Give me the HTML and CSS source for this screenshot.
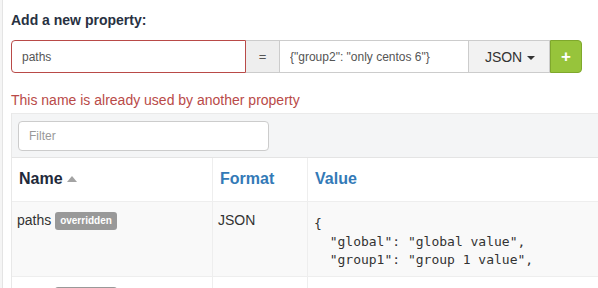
FILE: index.html
```html
<!DOCTYPE html>
<html lang="en">
<head>
  <meta charset="UTF-8">
  <title>Properties</title>
  <link rel="stylesheet" href="styles.css">
</head>
<body>
  <div class="page">
    <h4 class="add-title">Add a new property:</h4>
    <div class="add-group">
      <input class="add-name" type="text" value="paths">
      <span class="add-eq">=</span>
      <input class="add-value" type="text" value='{"group2": "only centos 6"}'>
      <button class="add-format" type="button">JSON <span class="caret"></span></button>
      <button class="add-btn" type="button">+</button>
    </div>
    <p class="add-error">This name is already used by another property</p>

    <div class="props">
      <div class="props-toolbar">
        <input class="props-filter" type="text" placeholder="Filter">
      </div>
      <table class="props-table">
        <thead>
          <tr>
            <th class="col-name">Name <span class="sort-up"></span></th>
            <th class="col-format"><a href="#">Format</a></th>
            <th class="col-value"><a href="#">Value</a></th>
          </tr>
        </thead>
        <tbody>
          <tr class="odd">
            <td>paths <span class="badge">overridden</span></td>
            <td>JSON</td>
            <td><pre class="code">{
  "global": "global value",
  "group1": "group 1 value",</pre></td>
          </tr>
          <tr>
            <td>paths <span class="badge">overridden</span></td>
            <td>JSON</td>
            <td><pre class="code">{</pre></td>
          </tr>
        </tbody>
      </table>
    </div>
  </div>
</body>
</html>
```

FILE: styles.css
```css
html, body {
  margin: 0;
  padding: 0;
  overflow: hidden;
}
body {
  font-family: "Liberation Sans", Arial, sans-serif;
  font-size: 14px;
  line-height: 20px;
  color: #333;
  background: #f5f5f5;
}
.page {
  margin-left: 2px;
  border-left: 1px solid #e4e4e4;
  background: #fff;
  padding: 10px 0 0 8px;
  min-height: 288px;
}
.add-title {
  margin: 0 0 10px;
  font-size: 14px;
  font-weight: bold;
  color: #283142;
}

/* input group */
.add-group {
  display: flex;
  width: 571px;
  height: 33px;
}
.add-group input {
  font-family: "Liberation Sans", Arial, sans-serif;
  font-size: 12px;
  color: #555;
  box-sizing: border-box;
  height: 33px;
  padding: 0 10px;
  border: 1px solid #ccc;
  outline: none;
  margin: 0;
}
.add-name {
  width: 235px;
  border-color: #b94a48 !important;
  border-radius: 4px 0 0 4px;
}
.add-eq {
  box-sizing: border-box;
  width: 33px;
  height: 33px;
  display: flex;
  align-items: center;
  justify-content: center;
  background: #eee;
  border: 1px solid #ccc;
  border-left: none;
  border-right: none;
  color: #555;
  font-size: 13px;
}
.add-value {
  width: 190px;
}
.add-format {
  box-sizing: border-box;
  width: 81px;
  height: 33px;
  margin: 0;
  background: #f2f2f2;
  border: 1px solid #ccc;
  border-left: none;
  font-family: "Liberation Sans", Arial, sans-serif;
  font-size: 14px;
  color: #333;
  padding: 0 0 0 2px;
}
.caret {
  display: inline-block;
  width: 0;
  height: 0;
  margin-left: 1px;
  vertical-align: middle;
  border-top: 4px solid #333;
  border-left: 4px solid transparent;
  border-right: 4px solid transparent;
}
.add-btn {
  box-sizing: border-box;
  width: 32px;
  height: 33px;
  margin: 0;
  padding: 0;
  background: #97c43b;
  border: 1px solid #7fa82c;
  border-radius: 0 4px 4px 0;
  color: #fff;
  font-family: "Liberation Sans", Arial, sans-serif;
  font-size: 17px;
  font-weight: bold;
}
.add-error {
  margin: 17px 0 3px;
  color: #b94a48;
}

/* properties table */
.props {
  border-left: 1px solid #e8e8e8;
}
.props-toolbar {
  background: #f4f5f6;
  padding: 7px 6px 6px;
  border-top: 1px solid #eaeaea;
  border-bottom: 1px solid #e4e4e4;
}
.props-filter {
  box-sizing: border-box;
  width: 251px;
  height: 30px;
  padding: 0 10px;
  border: 1px solid #ccc;
  border-radius: 4px;
  font-family: "Liberation Sans", Arial, sans-serif;
  font-size: 12px;
  color: #555;
  outline: none;
  display: block;
}
.props-filter::placeholder {
  color: #999;
}
.props-table {
  border-collapse: collapse;
  width: 620px;
}
.props-table th {
  text-align: left;
  font-size: 16px;
  font-weight: bold;
  height: 41px;
  padding: 0 7px 2px;
  color: #1f2a3b;
  border-left: 1px solid #eee;
  border-bottom: 1px solid #eee;
}
.props-table th:first-child {
  border-left: none;
}
.props-table th a {
  color: #337ab7;
  text-decoration: none;
}
.col-name { width: 186px; }
.col-format { width: 80px; }
.sort-up {
  display: inline-block;
  width: 0;
  height: 0;
  vertical-align: 2px;
  border-bottom: 6px solid #a3a3a3;
  border-left: 5px solid transparent;
  border-right: 5px solid transparent;
}
.props-table td {
  vertical-align: top;
  padding: 8px 5px 0;
  height: 66px;
  border-left: 1px solid #eee;
  border-bottom: 1px solid #eee;
}
.props-table td:first-child {
  border-left: none;
}
.props-table tr.odd td {
  background: #f9f9f9;
}
.badge {
  display: inline-block;
  background: #999;
  color: #fff;
  font-size: 10px;
  font-weight: bold;
  line-height: 18px;
  padding: 0 5px;
  border-radius: 3px;
  vertical-align: 1px;
}
.code {
  margin: 5px 0 0 1px;
  font-family: "DejaVu Sans Mono", monospace;
  font-size: 13px;
  line-height: 18px;
  color: #333;
}
```
